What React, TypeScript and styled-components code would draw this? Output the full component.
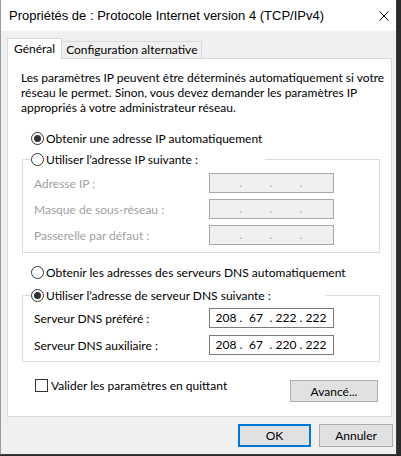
import React from "react";
import styled, { createGlobalStyle } from "styled-components";

const GlobalStyle = createGlobalStyle`
  html, body {
    margin: 0;
    padding: 0;
    background: #2b2b2b;
  }
  body {
    font-family: Lato, "Liberation Sans", Arial, sans-serif;
    font-size: 12px;
    color: #000;
  }
`;

// window frame
const Window = styled.div`
  width: 397px;
  height: 455px;
  box-sizing: border-box;
  background: #f0f0f0;
  border-left: 1px solid #9a9a9a;
  border-right: 1px solid #3a3a3a;
  border-bottom: 1px solid #3a3a3a;
  display: flex;
  flex-direction: column;
`;

const TitleBar = styled.div`
  height: 31px;
  flex-shrink: 0;
  background: #fff;
  display: flex;
  align-items: center;
  justify-content: space-between;
  padding: 0 7px 0 8px;
`;

const Title = styled.span`
  font-family: "Liberation Sans", Arial, sans-serif;
  font-size: 13px;
  color: #000;
  line-height: 15px;
`;

const CloseBtn = styled.div`
  width: 10px;
  height: 10px;
  display: flex;
`;

const Body = styled.div`
  padding: 7px 4px 0 6px;
  display: flex;
  flex-direction: column;
`;

const TabRow = styled.div`
  display: flex;
  align-items: flex-end;
  height: 20px;
  position: relative;
  z-index: 1;
`;

const Tab = styled.div<{ $active?: boolean }>`
  box-sizing: border-box;
  border: 1px solid #d9d9d9;
  border-bottom: none;
  background: ${(p) => (p.$active ? "#fff" : "#f0f0f0")};
  height: ${(p) => (p.$active ? "21px" : "17px")};
  margin-bottom: ${(p) => (p.$active ? "-1px" : "0")};
  margin-left: ${(p) => (p.$active ? "0" : "-1px")};
  padding: ${(p) => (p.$active ? "0 6px" : "0 4px")};
  line-height: ${(p) => (p.$active ? "20px" : "16px")};
  white-space: nowrap;
`;

const Panel = styled.div`
  height: 359px;
  box-sizing: border-box;
  background: #fff;
  border: 1px solid #d9d9d9;
  padding: 11px 0 0 0;
  display: flex;
  flex-direction: column;
`;

const Intro = styled.p`
  margin: 0;
  padding-left: 13px;
  line-height: 15px;
  white-space: nowrap;
`;

const RadioRow = styled.label<{ $top: number }>`
  display: flex;
  align-items: center;
  gap: 2px;
  height: 15px;
  line-height: 15px;
  margin: ${(p) => p.$top}px 0 0 23px;
  white-space: nowrap;
`;

const RadioCircle = styled.span<{ $checked?: boolean }>`
  width: 13px;
  height: 13px;
  box-sizing: border-box;
  border: 1px solid #333;
  border-radius: 50%;
  background: #fff;
  display: flex;
  align-items: center;
  justify-content: center;
  flex-shrink: 0;
  &::after {
    content: "";
    width: 7px;
    height: 7px;
    border-radius: 50%;
    background: ${(p) => (p.$checked ? "#333" : "transparent")};
  }
`;

const Group = styled.fieldset<{ $top: number }>`
  margin: ${(p) => p.$top}px 0 0 14px;
  width: 358px;
  box-sizing: border-box;
  border: 1px solid #dcdcdc;
  padding: 0 0 0 11px;
  min-inline-size: 0;
`;

const Legend = styled.legend<{ $width: number }>`
  padding: 0;
  margin-left: -3px;
  width: ${(p) => p.$width}px;
  height: 15px;
  display: flex;
  align-items: center;
  gap: 2px;
  line-height: 15px;
  white-space: nowrap;
`;

const Rows = styled.div<{ $gap: number; $pt: number; $pb: number }>`
  display: flex;
  flex-direction: column;
  gap: ${(p) => p.$gap}px;
  padding: ${(p) => p.$pt}px 0 ${(p) => p.$pb}px 0;
`;

const FieldRow = styled.div`
  display: flex;
  align-items: center;
  height: 20px;
`;

const FieldLabel = styled.span<{ $disabled?: boolean }>`
  width: 175px;
  color: ${(p) => (p.$disabled ? "#a0a0a0" : "#000")};
  white-space: nowrap;
`;

const IpBox = styled.div<{ $disabled?: boolean }>`
  width: 125px;
  height: 20px;
  box-sizing: border-box;
  border: 1px solid ${(p) => (p.$disabled ? "#a8a8a8" : "#7a7a7a")};
  background: ${(p) => (p.$disabled ? "#f0f0f0" : "#fff")};
  display: grid;
  grid-template-columns: 24px 6px 24px 6px 24px 6px 24px;
  padding-left: 4px;
  align-items: center;
  line-height: 18px;
  text-align: center;
`;

const IpDot = styled.span<{ $disabled?: boolean }>`
  color: ${(p) => (p.$disabled ? "#a0a0a0" : "#000")};
`;

const IpPart = styled.span``;

const BottomRow = styled.div`
  display: flex;
  align-items: flex-start;
  margin-top: 16px;
  padding: 0 13px 0 27px;
`;

const CheckLabel = styled.label`
  display: flex;
  align-items: center;
  gap: 3px;
  height: 15px;
  line-height: 15px;
  white-space: nowrap;
`;

const CheckBox = styled.span`
  width: 13px;
  height: 13px;
  box-sizing: border-box;
  border: 1px solid #333;
  background: #fff;
  flex-shrink: 0;
`;

const Button = styled.button<{ $default?: boolean; $w: number; $h: number }>`
  width: ${(p) => p.$w}px;
  height: ${(p) => p.$h}px;
  box-sizing: border-box;
  background: #e1e1e1;
  border: ${(p) => (p.$default ? "2px solid #0078d7" : "1px solid #adadad")};
  font-family: inherit;
  font-size: 12px;
  color: #000;
  padding: 0;
  margin: 0;
`;

const Advanced = styled(Button)`
  margin-left: auto;
  margin-top: 2px;
`;

const Footer = styled.div`
  display: flex;
  justify-content: flex-end;
  gap: 8px;
  margin: 7px -1px 0 0;
`;

const IpField = ({ parts, disabled }: { parts: string[]; disabled?: boolean }) => (
  <IpBox $disabled={disabled}>
    {parts.map((p, i) => (
      <React.Fragment key={i}>
        {i > 0 && <IpDot $disabled={disabled}>.</IpDot>}
        <IpPart>{p}</IpPart>
      </React.Fragment>
    ))}
  </IpBox>
);

const empty = ["", "", "", ""];

export default function App() {
  return (
    <>
      <GlobalStyle />
      <Window>
        <TitleBar>
          <Title>Propriétés de : Protocole Internet version 4 (TCP/IPv4)</Title>
          <CloseBtn>
            <svg width="10" height="10" viewBox="0 0 10 10">
              <path d="M0.5 0.5 L9.5 9.5 M9.5 0.5 L0.5 9.5" stroke="#000" strokeWidth="1" />
            </svg>
          </CloseBtn>
        </TitleBar>
        <Body>
          <TabRow>
            <Tab $active>Général</Tab>
            <Tab>Configuration alternative</Tab>
          </TabRow>
          <Panel>
            <Intro>
              Les paramètres IP peuvent être déterminés automatiquement si votre
              <br />
              réseau le permet. Sinon, vous devez demander les paramètres IP
              <br />
              appropriés à votre administrateur réseau.
            </Intro>

            <RadioRow $top={16}>
              <RadioCircle $checked />
              Obtenir une adresse IP automatiquement
            </RadioRow>

            <Group $top={6}>
              <Legend $width={234}>
                <RadioCircle />
                Utiliser l’adresse IP suivante :
              </Legend>
              <Rows $gap={6} $pt={6} $pb={7}>
                <FieldRow>
                  <FieldLabel $disabled>Adresse IP :</FieldLabel>
                  <IpField parts={empty} disabled />
                </FieldRow>
                <FieldRow>
                  <FieldLabel $disabled>Masque de sous-réseau :</FieldLabel>
                  <IpField parts={empty} disabled />
                </FieldRow>
                <FieldRow>
                  <FieldLabel $disabled>Passerelle par défaut :</FieldLabel>
                  <IpField parts={empty} disabled />
                </FieldRow>
              </Rows>
            </Group>

            <RadioRow $top={12}>
              <RadioCircle />
              Obtenir les adresses des serveurs DNS automatiquement
            </RadioRow>

            <Group $top={8}>
              <Legend $width={294}>
                <RadioCircle $checked />
                Utiliser l’adresse de serveur DNS suivante :
              </Legend>
              <Rows $gap={7} $pt={5} $pb={6}>
                <FieldRow>
                  <FieldLabel>Serveur DNS préféré :</FieldLabel>
                  <IpField parts={["208", "67", "222", "222"]} />
                </FieldRow>
                <FieldRow>
                  <FieldLabel>Serveur DNS auxiliaire :</FieldLabel>
                  <IpField parts={["208", "67", "220", "222"]} />
                </FieldRow>
              </Rows>
            </Group>

            <BottomRow>
              <CheckLabel>
                <CheckBox />
                Valider les paramètres en quittant
              </CheckLabel>
              <Advanced $w={88} $h={22}>Avancé...</Advanced>
            </BottomRow>
          </Panel>
          <Footer>
            <Button $default $w={73} $h={23}>OK</Button>
            <Button $w={74} $h={23}>Annuler</Button>
          </Footer>
        </Body>
      </Window>
    </>
  );
}
